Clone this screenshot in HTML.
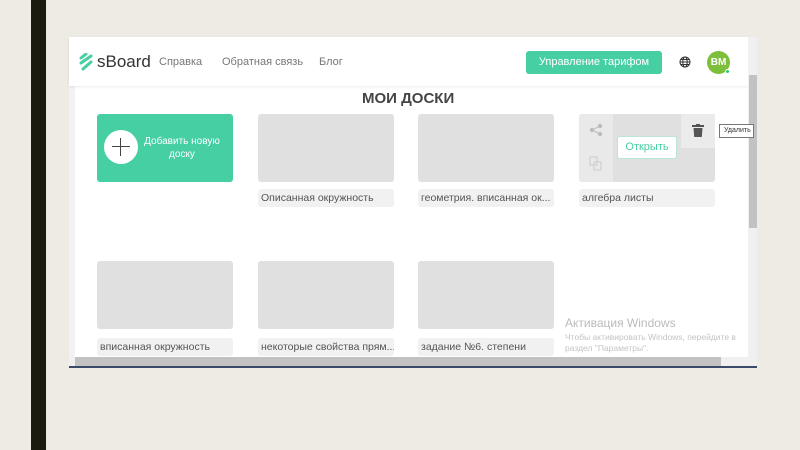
<!DOCTYPE html>
<html><head><meta charset="utf-8"><style>
*{margin:0;padding:0;box-sizing:border-box}
body{width:800px;height:450px;background:#eeebe4;position:relative;overflow:hidden;font-family:"Liberation Sans",sans-serif}
.a{position:absolute}
.card{position:absolute;background:#e0e0e0;border-radius:3px;width:136px;height:68px}
.lbl{position:absolute;background:#f1f1f1;border-radius:3px;width:136px;height:18px;font-size:10.5px;color:#555;line-height:19px;padding-left:3px;white-space:nowrap;overflow:hidden}
</style></head><body>
<div class="a" style="left:31px;top:0;width:15px;height:450px;background:#1b1b10"></div>
<div class="a" style="left:69px;top:37px;width:688px;height:331px;background:#fff"></div>
<div class="a" style="left:69px;top:85px;width:6px;height:272px;background:#f2f2f4"></div>
<div class="a" style="left:69px;top:37px;width:679px;height:49px;background:#fff;box-shadow:0 1px 3px rgba(0,0,0,.08)"></div>
<svg class="a" style="left:78px;top:53px" width="16" height="18" viewBox="0 0 16 18"><g stroke="#46cfa3" stroke-width="3" stroke-linecap="round"><path d="M3 5 L8 1"/><path d="M3 10 L13 3"/><path d="M5 16 L13 9"/></g></svg>
<div class="a" style="left:97px;top:52px;font-size:17px;color:#333">sBoard</div>
<div class="a" style="left:159px;top:56px;font-size:11px;color:#777">Справка</div>
<div class="a" style="left:222px;top:56px;font-size:11px;color:#777">Обратная связь</div>
<div class="a" style="left:319px;top:56px;font-size:11px;color:#777">Блог</div>
<div class="a" style="left:526px;top:51px;width:136px;height:23px;background:#46cfa3;border-radius:3px;color:#fff;font-size:11px;text-align:center;line-height:23px">Управление тарифом</div>
<svg class="a" style="left:679px;top:56px" width="12" height="12" viewBox="0 0 12 12" fill="none" stroke="#333" stroke-width="1"><circle cx="6" cy="6" r="5"/><ellipse cx="6" cy="6" rx="2.2" ry="5"/><path d="M1 6h10M2 3.5h8M2 8.5h8"/></svg>
<div class="a" style="left:707px;top:51px;width:23px;height:23px;border-radius:50%;background:#7dbf3a;color:#fff;font-size:10px;font-weight:bold;text-align:center;line-height:23px">BM</div>
<div class="a" style="left:725px;top:69px;width:5px;height:5px;border-radius:50%;background:#2ecc71;border:1px solid #fff"></div>
<div class="a" style="left:362px;top:90px;font-size:15px;font-weight:bold;color:#444">МОИ ДОСКИ</div>
<div class="a" style="left:97px;top:114px;width:136px;height:68px;background:#46cfa3;border-radius:3px"></div>
<div class="a" style="left:104px;top:130px;width:34px;height:34px;border-radius:50%;background:#fff"></div>
<div class="a" style="left:112px;top:146px;width:18px;height:1.3px;background:#444"></div>
<div class="a" style="left:120px;top:138px;width:1.3px;height:18px;background:#444"></div>
<div class="a" style="left:140px;top:135px;width:84px;font-size:10px;color:#fff;text-align:center;line-height:13px">Добавить новую доску</div>
<div class="card" style="left:258px;top:114px"></div>
<div class="card" style="left:418px;top:114px"></div>
<div class="card" style="left:579px;top:114px"></div>
<div class="a" style="left:579px;top:114px;width:34px;height:68px;background:#e9e9e9;border-radius:3px 0 0 3px"></div>
<svg class="a" style="left:589px;top:123px" width="14" height="14" viewBox="0 0 14 14" fill="#bbb" stroke="#bbb"><circle cx="11" cy="3" r="1.6"/><circle cx="3" cy="7" r="1.6"/><circle cx="11" cy="11" r="1.6"/><path d="M11 3L3 7L11 11" fill="none"/></svg>
<svg class="a" style="left:589px;top:156px" width="14" height="16" viewBox="0 0 14 16" fill="none" stroke="#ccc"><rect x="1" y="1" width="7" height="8"/><rect x="5" y="6" width="7" height="8"/></svg>
<div class="a" style="left:681px;top:114px;width:34px;height:34px;background:#ebebeb"></div>
<svg class="a" style="left:692px;top:124px" width="12" height="13" viewBox="0 0 12 13" fill="#555"><rect x="0" y="1" width="12" height="2"/><rect x="4" y="0" width="4" height="1.5"/><path d="M1.5 4h9l-0.7 9h-7.6z"/></svg>
<div class="a" style="left:617px;top:136px;width:60px;height:23px;background:#fff;border:1px solid #b8e8d5;border-radius:3px;color:#46cfa3;font-size:11px;text-align:center;line-height:21px">Открыть</div>
<div class="lbl" style="left:258px;top:189px">Описанная окружность</div>
<div class="lbl" style="left:418px;top:189px">геометрия. вписанная ок...</div>
<div class="lbl" style="left:579px;top:189px">алгебра листы</div>
<div class="card" style="left:97px;top:261px"></div>
<div class="card" style="left:258px;top:261px"></div>
<div class="card" style="left:418px;top:261px"></div>
<div class="lbl" style="left:97px;top:338px">вписанная окружность</div>
<div class="lbl" style="left:258px;top:338px">некоторые свойства прям...</div>
<div class="lbl" style="left:418px;top:338px">задание №6. степени</div>
<div class="a" style="left:565px;top:316px;font-size:12px;color:#bbb">Активация Windows</div>
<div class="a" style="left:565px;top:332px;font-size:8.5px;color:#c4c4c4;line-height:11px">Чтобы активировать Windows, перейдите в<br>раздел "Параметры".</div>
<div class="a" style="left:748px;top:37px;width:9px;height:320px;background:#f0f0f0"></div>
<div class="a" style="left:749px;top:75px;width:8px;height:153px;background:#c2c2c2"></div>
<div class="a" style="left:69px;top:357px;width:688px;height:9px;background:#f0f0f0"></div>
<div class="a" style="left:75px;top:357px;width:646px;height:9px;background:#c2c2c2"></div>
<div class="a" style="left:69px;top:366px;width:688px;height:2px;background:#3b4a66"></div>
<div class="a" style="left:719px;top:124px;width:35px;height:14px;background:#fff;border:1px solid #777;font-size:7px;line-height:12px;padding-left:4px;color:#333">Удалить</div>
</body></html>
